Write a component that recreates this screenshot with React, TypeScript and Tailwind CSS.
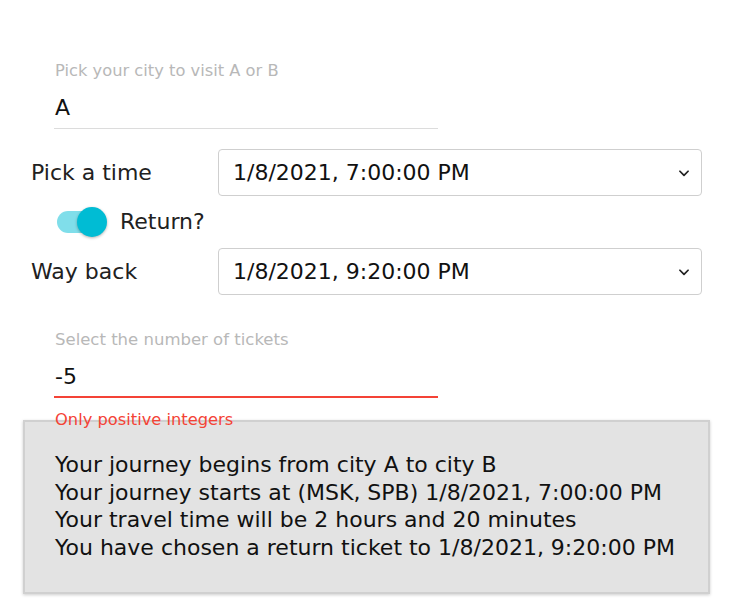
import React from "react";

const Chevron = () => (
  <svg width="14" height="14" viewBox="0 0 24 24" fill="none" stroke="#222" strokeWidth="3" strokeLinecap="round" strokeLinejoin="round">
    <path d="M5 9l7 7 7-7" />
  </svg>
);

const FakeSelect = ({ value }: { value: string }) => (
  <div className="flex h-[47px] w-[484px] items-center justify-between rounded-[4px] border border-[#cfcfcf] bg-white pl-[14px] pr-[10px]">
    <span className="text-[22px] leading-[30px] text-[#111]">{value}</span>
    <Chevron />
  </div>
);

const App = () => {
  const lines = [
    "Your journey begins from city A to city B",
    "Your journey starts at (MSK, SPB) 1/8/2021, 7:00:00 PM",
    "Your travel time will be 2 hours and 20 minutes",
    "You have chosen a return ticket to 1/8/2021, 9:20:00 PM",
  ];

  return (
    <div className="h-[605px] w-[729px] overflow-hidden bg-white font-['DejaVu_Sans',sans-serif] text-[#212121]">
      <div className="ml-[54px] w-[384px] pt-[61px]">
        <div className="pl-[1px] text-[16.3px] leading-[20px] text-[#b8b8b8]">Pick your city to visit A or B</div>
        <div className="mt-[8px] h-[40px] border-b border-[#dcdcdc] pl-[1px] text-[22px] leading-[38px] text-[#111]">A</div>
      </div>

      <div className="mt-[20px] flex items-center pl-[31px]">
        <div className="w-[187px] text-[22px] leading-[30px]">Pick a time</div>
        <FakeSelect value="1/8/2021, 7:00:00 PM" />
      </div>

      <div className="mt-[11px] flex h-[30px] items-center pl-[57px]">
        <div className="relative h-[22px] w-[44px] rounded-full bg-[#80deea]">
          <div className="absolute right-[-6px] top-[-4px] h-[30px] w-[30px] rounded-full bg-[#00bcd4] shadow-[0_1px_3px_rgba(0,0,0,0.3)]" />
        </div>
        <span className="ml-[19px] text-[22px] leading-[30px]">Return?</span>
      </div>

      <div className="mt-[11px] flex items-center pl-[31px]">
        <div className="w-[187px] text-[22px] leading-[30px]">Way back</div>
        <FakeSelect value="1/8/2021, 9:20:00 PM" />
      </div>

      <div className="ml-[54px] w-[384px] pt-[35px]">
        <div className="pl-[1px] text-[16.5px] leading-[20px] text-[#b8b8b8]">Select the number of tickets</div>
        <div className="mt-[8px] h-[40px] border-b-2 border-[#f44336] pl-[1px] text-[22px] leading-[38px] text-[#111]">-5</div>
        <div className="relative z-10 mt-[12px] h-[10px] pl-[1px] text-[16.3px] leading-[20px] text-[#f44336]">Only positive integers</div>
      </div>

      <div className="ml-[23px] h-[174px] w-[687px] border-2 border-[#d0d0d0] bg-[#e3e3e3] pl-[30px] pt-[29px] shadow-[0_1px_3px_rgba(0,0,0,0.2)]">
        {lines.map((line) => (
          <div key={line} className="text-[22px] leading-[27.7px] text-[#111]">
            {line}
          </div>
        ))}
      </div>
    </div>
  );
};

export default App;
